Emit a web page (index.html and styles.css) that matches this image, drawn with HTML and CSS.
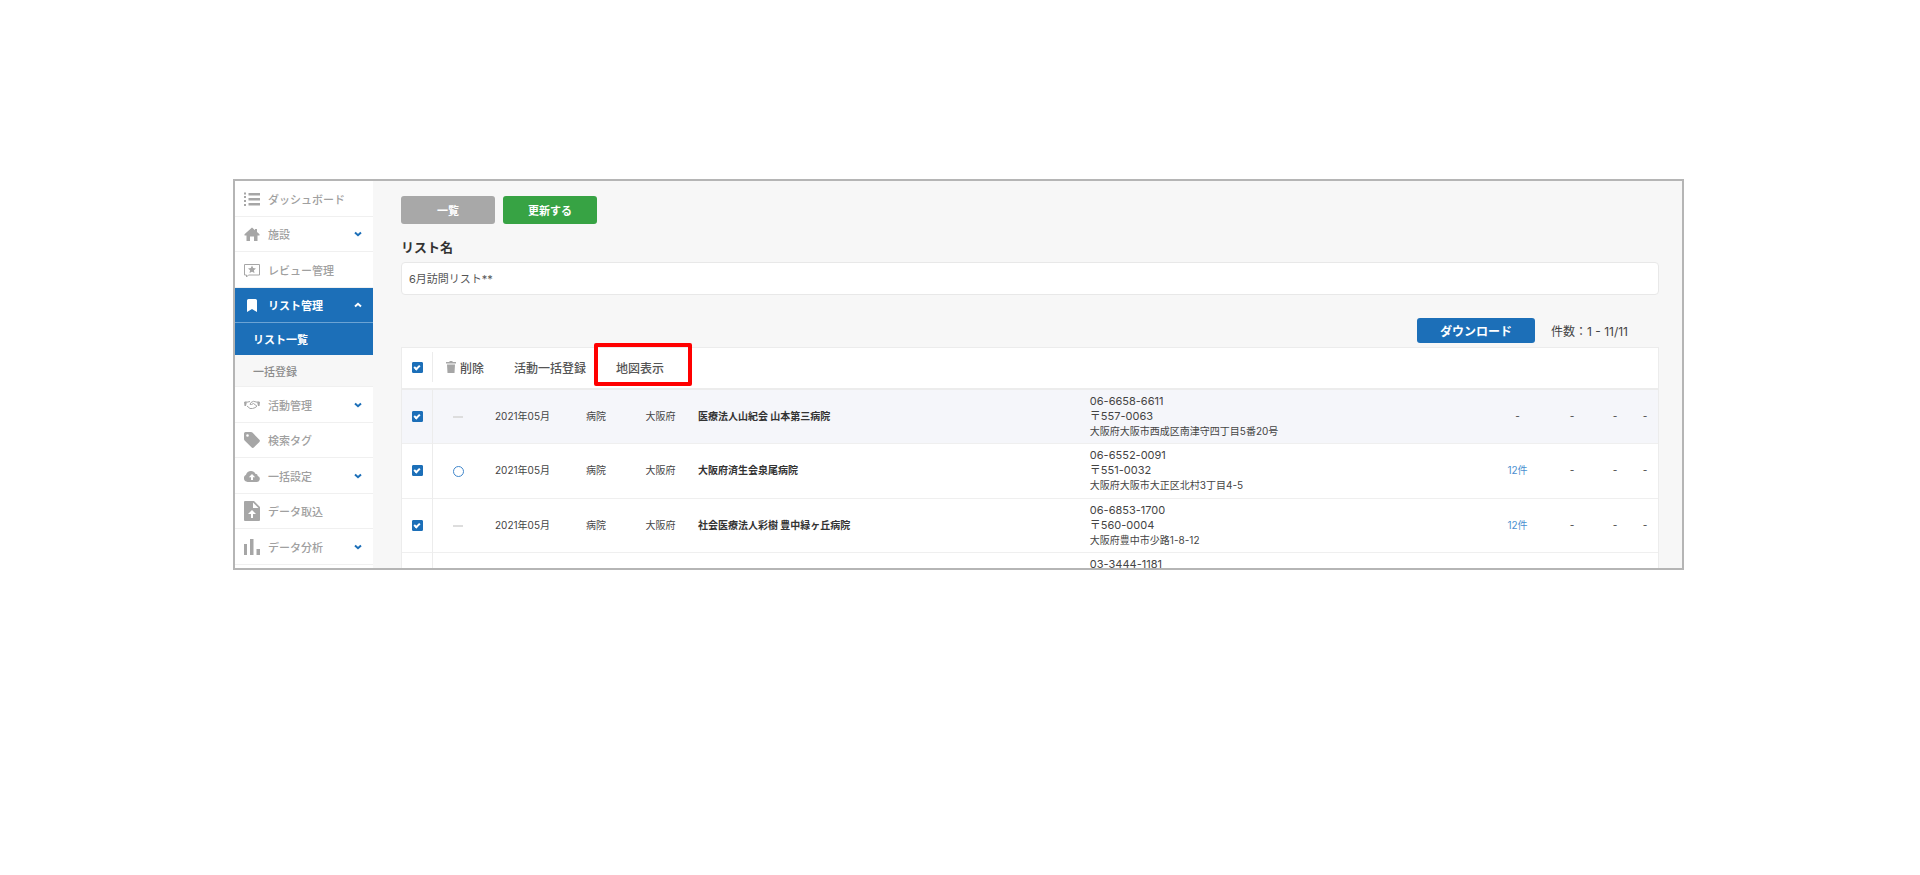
FILE: index.html
```html
<!DOCTYPE html>
<html lang="ja">
<head>
<meta charset="utf-8">
<title>リスト管理</title>
<link rel="stylesheet" href="styles.css">
</head>
<body>
<div class="frame">
  <nav class="sidebar">
    <ul class="menu">
      <li class="menu-item"><a class="menu-link" href="#">
        <svg class="icon" viewBox="0 0 16 16"><path d="M0 1.500h2v2H0zM0 5h2v2H0zM0 9h2v2H0zM0 13h2v2H0zM4.500 2H16v2.500H4.500zM4.500 7H16v2.500H4.500zM4.500 12H16v2.500H4.500z"/></svg>
        <span class="menu-text">ダッシュボード</span></a></li>
      <li class="menu-item"><a class="menu-link" href="#">
        <svg class="icon" viewBox="0 0 16 16"><path d="M8 1.500l3 2.700V3h2v3l2.500 2.300V9.500H13.500V15H10v-4.500H6V15H2.500V9.500H.5V8.300z"/></svg>
        <span class="menu-text">施設</span>
        <svg class="chevron" viewBox="0 0 8 8"><path d="M1 2.500l3 2.700 3-2.700"/></svg></a></li>
      <li class="menu-item"><a class="menu-link" href="#">
        <svg class="icon" viewBox="0 0 16 16"><path class="line" d="M.5 2.500h15v10.500H4.500L2.500 15v-2H.5z"/><path d="M8 3.500l1.200 2.600 2.800.3-2.100 1.900.6 2.800L8 9.700l-2.500 1.400.6-2.800L4 6.400l2.800-.3z"/></svg>
        <span class="menu-text">レビュー管理</span></a></li>
      <li class="menu-item open"><a class="menu-link" href="#">
        <svg class="icon" viewBox="0 0 16 16"><path d="M4.500 2h7a1.500 1.500 0 0 1 1.500 1.500V15l-5-3-5 3V3.500A1.500 1.500 0 0 1 4.500 2z"/></svg>
        <span class="menu-text">リスト管理</span>
        <svg class="chevron" viewBox="0 0 8 8"><path d="M1 5.500l3-2.700 3 2.700"/></svg></a>
        <ul class="submenu">
          <li><a class="sub-link current" href="#">リスト一覧</a></li>
          <li><a class="sub-link" href="#">一括登録</a></li>
        </ul></li>
      <li class="menu-item"><a class="menu-link" href="#">
        <svg class="icon" viewBox="0 0 16 16"><path d="M0 5l2-.8 1 .5-1 4.300H.5zM16 5l-2-.8-1 .5 1 4.300h1.500z"/><path class="line" d="M3 5.200l3-.7M13 5.200L9.500 4.300 7 5.500 6 7.300l1.500.2L9.500 6.500l3.500 2.700M3 9l3 2.500h2.500l2.500-.8 2-1.500"/></svg>
        <span class="menu-text">活動管理</span>
        <svg class="chevron" viewBox="0 0 8 8"><path d="M1 2.500l3 2.700 3-2.700"/></svg></a></li>
      <li class="menu-item"><a class="menu-link" href="#">
        <svg class="icon" viewBox="0 0 16 16"><path fill-rule="evenodd" d="M0 1.500A1.500 1.500 0 0 1 1.500 0H7a2 2 0 0 1 1.400.6l7 7.200a1.500 1.500 0 0 1 0 2.100l-5.600 5.600a1.500 1.500 0 0 1-2.100 0L.6 8.400A2 2 0 0 1 0 7zM3.500 2.200a1.300 1.300 0 1 0 0 2.600 1.300 1.300 0 0 0 0-2.600z"/></svg>
        <span class="menu-text">検索タグ</span></a></li>
      <li class="menu-item"><a class="menu-link" href="#">
        <svg class="icon" viewBox="0 0 16 16"><path fill-rule="evenodd" d="M3.500 14A3.800 3.800 0 0 1 2 6.800C2.500 4.500 4.500 3 7 3c2 0 3.700 1 4.300 2.700A2.500 2.500 0 0 1 13.800 8 3.100 3.100 0 0 1 13 14zM8 6L4.800 9.300H7V12h2V9.300h2.200z"/></svg>
        <span class="menu-text">一括設定</span>
        <svg class="chevron" viewBox="0 0 8 8"><path d="M1 2.500l3 2.700 3-2.700"/></svg></a></li>
      <li class="menu-item"><a class="menu-link" href="#">
        <svg class="icon tall" viewBox="0 0 16 20"><path fill-rule="evenodd" d="M1 0h9l6 6v13a1 1 0 0 1-1 1H1a1 1 0 0 1-1-1V1a1 1 0 0 1 1-1zM9 1.500V7h5.500zM8 9l-4 4h3v4h2v-4h3z"/></svg>
        <span class="menu-text">データ取込</span></a></li>
      <li class="menu-item"><a class="menu-link" href="#">
        <svg class="icon" viewBox="0 0 16 16"><path d="M0 5h3v11H0zM6 0h3.500v16H6zM12.500 10H16v6h-3.500z"/></svg>
        <span class="menu-text">データ分析</span>
        <svg class="chevron" viewBox="0 0 8 8"><path d="M1 2.500l3 2.700 3-2.700"/></svg></a></li>
    </ul>
  </nav>
  <main class="main">
    <div class="actions">
      <button class="btn gray" type="button">一覧</button>
      <button class="btn green" type="button">更新する</button>
    </div>
    <label class="field-label" for="list-name">リスト名</label>
    <input class="field" id="list-name" type="text" value="6月訪問リスト**">
    <div class="summary">
      <button class="btn download" type="button">ダウンロード</button>
      <span class="count">件数：1 - 11/11</span>
    </div>
    <div class="toolbar">
      <div class="tool-check"><input class="check" type="checkbox" aria-label="すべて選択" checked></div>
      <button class="tool delete" type="button"><svg class="trash" viewBox="0 0 10 12"><path d="M3.500 0h3v1H10v1.500H0V1h3.500zM1 3.500h8L8.500 12h-7z"/></svg>削除</button>
      <button class="tool" type="button">活動一括登録</button>
      <button class="tool marked" type="button">地図表示</button>
    </div>
    <table class="list">
      <colgroup><col class="c-check"><col class="c-status"><col class="c-date"><col class="c-type"><col class="c-pref"><col class="c-name"><col><col class="c-count"><col class="c-a"><col class="c-b"><col class="c-c"></colgroup>
      <tbody>
        <tr class="selected">
          <td class="pick"><input class="check" type="checkbox" aria-label="医療法人山紀会 山本第三病院" checked></td>
          <td><span class="dash"></span></td><td>2021年05月</td><td>病院</td><td>大阪府</td>
          <td class="name">医療法人山紀会 山本第三病院</td>
          <td class="addr"><div class="num">06-6658-6611</div><div class="num">〒557-0063</div><div>大阪府大阪市西成区南津守四丁目5番20号</div></td>
          <td>-</td><td>-</td><td>-</td><td>-</td>
        </tr>
        <tr>
          <td class="pick"><input class="check" type="checkbox" aria-label="大阪府済生会泉尾病院" checked></td>
          <td><span class="ring"></span></td><td>2021年05月</td><td>病院</td><td>大阪府</td>
          <td class="name">大阪府済生会泉尾病院</td>
          <td class="addr"><div class="num">06-6552-0091</div><div class="num">〒551-0032</div><div>大阪府大阪市大正区北村3丁目4-5</div></td>
          <td><a class="link" href="#">12件</a></td><td>-</td><td>-</td><td>-</td>
        </tr>
        <tr>
          <td class="pick"><input class="check" type="checkbox" aria-label="社会医療法人彩樹 豊中緑ヶ丘病院" checked></td>
          <td><span class="dash"></span></td><td>2021年05月</td><td>病院</td><td>大阪府</td>
          <td class="name">社会医療法人彩樹 豊中緑ヶ丘病院</td>
          <td class="addr"><div class="num">06-6853-1700</div><div class="num">〒560-0004</div><div>大阪府豊中市少路1-8-12</div></td>
          <td><a class="link" href="#">12件</a></td><td>-</td><td>-</td><td>-</td>
        </tr>
        <tr>
          <td class="pick"></td><td></td><td></td><td></td><td></td><td class="name"></td>
          <td class="addr"><div class="num">03-3444-1181</div></td>
          <td></td><td></td><td></td><td></td>
        </tr>
      </tbody>
    </table>
  </main>
</div>
</body>
</html>
```
FILE: styles.css
```css
* { box-sizing: border-box; }

body {
  margin: 0;
  padding: 179px 236px 0 233px;
  background: #fff;
  color: #444;
  font-family: Inter, "Noto Sans CJK JP", sans-serif;
  font-size: 10px;
}

button, input { font-family: inherit; }
a { text-decoration: none; }
ul { margin: 0; padding: 0; list-style: none; }

.frame {
  display: flex;
  height: 391px;
  overflow: hidden;
  border: 2px solid #b5b5b5;
  background: #f7f7f7;
}

/* Sidebar */
.sidebar { flex: 0 0 138px; background: #fff; }
.menu-link {
  display: flex;
  align-items: center;
  height: 35px;
  padding: 0 11px 0 9px;
  border-bottom: 1px solid #f0f0f0;
  color: #a0a0a0;
  font-size: 11px;
  font-weight: 500;
}
.menu-item:nth-child(odd) > .menu-link { height: 36px; }
.icon { flex: none; width: 16px; height: 16px; fill: #a6a6a6; }
.icon.tall { height: 20px; }
.icon .line { fill: none; stroke: #a6a6a6; stroke-width: 1; }
.menu-text { flex: 1; margin-left: 8px; white-space: nowrap; }
.chevron { width: 8px; height: 8px; fill: none; stroke: #1c6fb8; stroke-width: 2; }
.open > .menu-link {
  border-color: #6ba3d4;
  background: #1c6fb8;
  color: #fff;
  font-weight: 700;
}
.open .icon { fill: #fff; }
.open .chevron { stroke: #fff; }
.sub-link {
  display: flex;
  align-items: center;
  height: 32px;
  padding-left: 18px;
  border-bottom: 1px solid #f0f0f0;
  background: #f7f7f7;
  color: #8c8c8c;
  font-size: 11px;
  font-weight: 500;
}
.sub-link.current { border-color: #1c6fb8; background: #1c6fb8; color: #fff; font-weight: 700; }

/* Main column */
.main { flex: 1; min-width: 0; padding: 15px 23px 0 28px; }
.actions { display: flex; gap: 8px; }
.btn {
  width: 94px;
  height: 28px;
  padding: 0 0 1px;
  border: 0;
  border-radius: 3px;
  color: #fff;
  font-size: 11px;
  font-weight: 700;
}
.gray { background: #a8a8a8; }
.green { background: #37a344; }
.field-label {
  display: block;
  margin: 13px 0 5px;
  color: #333;
  font-size: 13px;
  font-weight: 700;
  line-height: 20px;
}
.field {
  display: block;
  width: 100%;
  height: 33px;
  padding: 0 7px 2px;
  border: 1px solid #e8e8e8;
  border-radius: 4px;
  background: #fff;
  color: #555;
  font-size: 11px;
}
.summary {
  display: flex;
  justify-content: flex-end;
  align-items: center;
  gap: 16px;
  margin: 23px 0 4px;
  padding-right: 24px;
}
.download { width: 118px; height: 25px; background: #1c6fb8; font-size: 12px; }
.count { min-width: 84px; font-size: 12px; }

/* Bulk actions */
.toolbar {
  display: flex;
  align-items: center;
  height: 43px;
  padding-bottom: 2px;
  border: 1px solid #ececec;
  border-bottom-width: 2px;
  background: #fff;
}
.tool-check {
  display: flex;
  align-items: center;
  justify-content: center;
  width: 31px;
  height: 30px;
  border-right: 1px solid #ececec;
}
.tool {
  position: relative;
  padding: 0;
  margin-right: 30px;
  border: 0;
  background: none;
  color: #555;
  font-size: 12px;
  font-weight: 500;
}
.delete { display: flex; align-items: center; gap: 4px; margin-left: 13px; }
.trash { width: 10px; height: 12px; fill: #a6a6a6; }
.marked::after {
  content: "";
  position: absolute;
  inset: -16px -28px -10px -22px;
  border: 4px solid #f00;
  border-radius: 2px;
}

.check {
  display: block;
  appearance: none;
  width: 11px;
  height: 11px;
  margin: 0 auto;
  border: 1px solid #1c6fb8;
  border-radius: 1px;
  background: #fff;
}
.check:checked { background: #1c6fb8; }
.check:checked::after {
  content: "";
  display: block;
  box-sizing: content-box;
  width: 4px;
  height: 2px;
  margin: 2px auto 0;
  border: solid #fff;
  border-width: 0 0 2px 2px;
  transform: rotate(-45deg);
}

/* Facility list */
.list {
  width: 100%;
  table-layout: fixed;
  border-spacing: 0;
  border: solid #ececec;
  border-width: 0 1px;
  background: #fff;
  line-height: 15px;
}
.c-check { width: 31px; }
.c-status { width: 50px; }
.c-date { width: 79px; }
.c-type { width: 68px; }
.c-pref { width: 61px; }
.c-name { width: 31.2%; }
.c-count { width: 57px; }
.c-a { width: 52px; }
.c-b { width: 34px; }
.c-c { width: 26px; }
.list td { padding: 4px 0; border-bottom: 1px solid #efefef; text-align: center; }
.list tr:nth-child(even) td { padding-bottom: 5px; }
.list .pick { border-right: 1px solid #ececec; }
.list .name { padding-left: 7px; color: #333; font-weight: 700; text-align: left; }
.list .addr { padding-left: 7px; text-align: left; }
.num { font-size: 11px; }
.selected { background: #f5f6fa; }
.link { color: #4a8fd0; }
.dash { display: inline-block; width: 10px; height: 2px; background: #ddd; vertical-align: middle; }
.ring { display: inline-block; width: 11px; height: 11px; border: 1px solid #3f86cb; border-radius: 50%; vertical-align: middle; }
```
